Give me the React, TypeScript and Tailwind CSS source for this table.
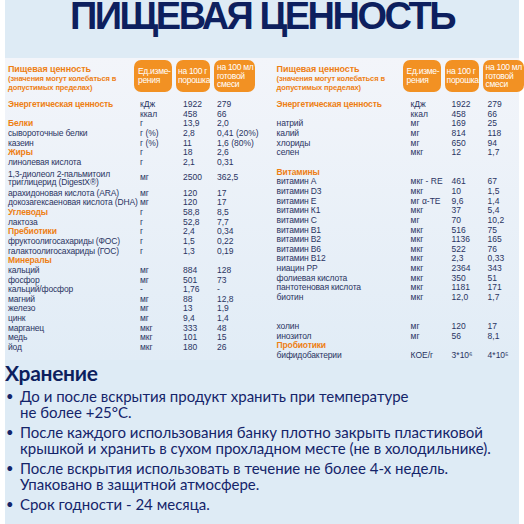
type Row = { name: string; unit?: string; a?: string; b?: string; head?: boolean; two?: boolean; blank?: boolean };

const leftRows: Row[] = [
  { name: "Энергетическая ценность", unit: "кДж", a: "1922", b: "279", head: true },
  { name: "", unit: "ккал", a: "458", b: "66" },
  { name: "Белки", unit: "г", a: "13,9", b: "2,0", head: true },
  { name: "сывороточные белки", unit: "г (%)", a: "2,8", b: "0,41 (20%)" },
  { name: "казеин", unit: "г (%)", a: "11", b: "1,6 (80%)" },
  { name: "Жиры", unit: "г", a: "18", b: "2,6", head: true },
  { name: "линолевая кислота", unit: "г", a: "2,1", b: "0,31" },
  { name: "1,3-диолеол 2-пальмитоил триглицерид (DigestX®)", unit: "мг", a: "2500", b: "362,5", two: true },
  { name: "арахидоновая кислота (ARA)", unit: "мг", a: "120", b: "17" },
  { name: "докозагексаеновая кислота (DHA)", unit: "мг", a: "120", b: "17" },
  { name: "Углеводы", unit: "г", a: "58,8", b: "8,5", head: true },
  { name: "лактоза", unit: "г", a: "52,8", b: "7,7" },
  { name: "Пребиотики", unit: "г", a: "2,4", b: "0,34", head: true },
  { name: "фруктоолигосахариды (ФОС)", unit: "г", a: "1,5", b: "0,22" },
  { name: "галактоолигосахариды (ГОС)", unit: "г", a: "1,3", b: "0,19" },
  { name: "Минералы", head: true },
  { name: "кальций", unit: "мг", a: "884", b: "128" },
  { name: "фосфор", unit: "мг", a: "501", b: "73" },
  { name: "кальций/фосфор", unit: "-", a: "1,76", b: "-" },
  { name: "магний", unit: "мг", a: "88", b: "12,8" },
  { name: "железо", unit: "мг", a: "13", b: "1,9" },
  { name: "цинк", unit: "мг", a: "9,4", b: "1,4" },
  { name: "марганец", unit: "мкг", a: "333", b: "48" },
  { name: "медь", unit: "мкг", a: "101", b: "15" },
  { name: "йод", unit: "мкг", a: "180", b: "26" },
];

const rightRows: Row[] = [
  { name: "Энергетическая ценность", unit: "кДж", a: "1922", b: "279", head: true },
  { name: "", unit: "ккал", a: "458", b: "66" },
  { name: "натрий", unit: "мг", a: "169", b: "25" },
  { name: "калий", unit: "мг", a: "814", b: "118" },
  { name: "хлориды", unit: "мг", a: "650", b: "94" },
  { name: "селен", unit: "мкг", a: "12", b: "1,7" },
  { name: "", blank: true },
  { name: "Витамины", head: true },
  { name: "витамин А", unit: "мкг - RE", a: "461", b: "67" },
  { name: "витамин D3", unit: "мкг", a: "10", b: "1,5" },
  { name: "витамин Е", unit: "мг α-TE", a: "9,6", b: "1,4" },
  { name: "витамин К1", unit: "мкг", a: "37", b: "5,4" },
  { name: "витамин С", unit: "мг", a: "70", b: "10,2" },
  { name: "витамин В1", unit: "мкг", a: "516", b: "75" },
  { name: "витамин В2", unit: "мкг", a: "1136", b: "165" },
  { name: "витамин В6", unit: "мкг", a: "522", b: "76" },
  { name: "витамин В12", unit: "мкг", a: "2,3", b: "0,33" },
  { name: "ниацин РР", unit: "мкг", a: "2364", b: "343" },
  { name: "фолиевая кислота", unit: "мкг", a: "350", b: "51" },
  { name: "пантотеновая кислота", unit: "мкг", a: "1181", b: "171" },
  { name: "биотин", unit: "мкг", a: "12,0", b: "1,7" },
  { name: "", blank: true },
  { name: "", blank: true },
  { name: "холин", unit: "мг", a: "120", b: "17" },
  { name: "инозитол", unit: "мг", a: "56", b: "8,1" },
  { name: "Пробиотики", head: true },
  { name: "бифидобактерии", unit: "КОЕ/г", a: "3*10⁶", b: "4*10⁵" },
];

function Pills() {
  return (
    <div className="flex gap-[4px] text-white text-[8.5px] leading-[8.5px] tracking-[-0.3px] whitespace-nowrap">
      <div className="w-[38px] h-[32px] rounded-[7px] bg-[#f29123] pl-[4px] pt-[7px]">
        Ед.изме-<br />рения
      </div>
      <div className="w-[34px] h-[32px] rounded-[7px] bg-[#f29123] pl-[2px] pt-[7px]">
        на 100 г<br />порошка
      </div>
      <div className="w-[41px] h-[32px] rounded-[7px] bg-[#f29123] pl-[3px] pt-[3px]">
        на 100 мл<br />готовой<br />смеси
      </div>
    </div>
  );
}

function Table({ rows, unitPad, aPad, bPad }: { rows: Row[]; unitPad: string; aPad: string; bPad: string }) {
  return (
    <div className="flex flex-col">
      <div className="flex items-start h-[40px]">
        <div className="w-[126px] pt-[5px] text-[#ee7f14] font-bold text-[7.5px] leading-[9px] tracking-[-0.1px]">
          <div className="text-[9px] leading-[9px]">Пищевая ценность</div>
          (значения могут колебаться в<br />допустимых пределах)
        </div>
        <Pills />
      </div>
      <div className="flex flex-col text-[8.5px] leading-[9.65px] text-[#2a3462] whitespace-nowrap">
        {rows.map((r, i) => (
          <div key={i} className={"flex " + (r.two ? "items-center py-[2px]" : "") + (r.blank ? " h-[9.65px]" : "")}>
            <div
              className={
                "w-[126px] shrink-0 tracking-[-0.15px] " +
                (r.head ? "font-bold text-[#ee7f14]" : "") +
                (r.two ? " leading-[8.5px]" : "")
              }
            >
              {r.two ? (
                <>
                  1,3-диолеол 2-пальмитоил<br />триглицерид (DigestX®)
                </>
              ) : (
                r.name
              )}
            </div>
            <div className={"w-[42px] shrink-0 " + unitPad}>{r.unit}</div>
            <div className={"w-[37px] shrink-0 " + aPad}>{r.a}</div>
            <div className={"shrink-0 " + bPad}>{r.b}</div>
          </div>
        ))}
      </div>
    </div>
  );
}

const bullets = [
  ["До и после вскрытия продукт хранить при температуре", "не более +25°С."],
  ["После каждого использования банку плотно закрыть пластиковой", "крышкой и хранить в сухом прохладном месте (не в холодильнике)."],
  ["После вскрытия использовать в течение не более 4-х недель.", "Упаковано в защитной атмосфере."],
  ["Срок годности - 24 месяца."],
];

export default function App() {
  return (
    <div className="w-[524px] h-[524px] overflow-hidden bg-white px-[5px] font-['Open_Sans',sans-serif]">
      <div className="h-full bg-[#deebf5] flex flex-col">
        <h1 className="shrink-0 h-[61px] -mt-[3px] text-center font-['Liberation_Sans',sans-serif] font-bold text-[38px] leading-[38px] tracking-[-2.5px] text-[#0d1f5e] whitespace-nowrap">
          ПИЩЕВАЯ ЦЕННОСТЬ
        </h1>
        <div className="shrink-0 h-[302px] bg-gradient-to-b from-[#f3f5fa] to-[#e1ecf6] flex gap-[13px] pl-[3px] pt-[2px] font-['Liberation_Sans',sans-serif]">
          <Table rows={leftRows} unitPad="pl-[6px]" aPad="pl-[7px]" bPad="pl-[4px]" />
          <div className="pl-[5px]">
            <Table rows={rightRows} unitPad="pl-[8px]" aPad="pl-[7px]" bPad="pl-[6px]" />
          </div>
        </div>
        <div className="shrink-0 text-[#14246a] font-['Lato',sans-serif]">
          <h2 className="text-[21px] leading-[26px] font-bold tracking-[-0.3px] text-[#0d1f5e]">Хранение</h2>
          <ul className="flex flex-col gap-[4px] mt-[2px]">
            {bullets.map((b, i) => (
              <li key={i} className="flex text-[15px] leading-[16px] whitespace-nowrap">
                <span className="w-[15px] shrink-0 text-[13px] pl-[1px]">•</span>
                <span>
                  {b.map((l, j) => (
                    <div key={j}>{l}</div>
                  ))}
                </span>
              </li>
            ))}
          </ul>
        </div>
      </div>
    </div>
  );
}
